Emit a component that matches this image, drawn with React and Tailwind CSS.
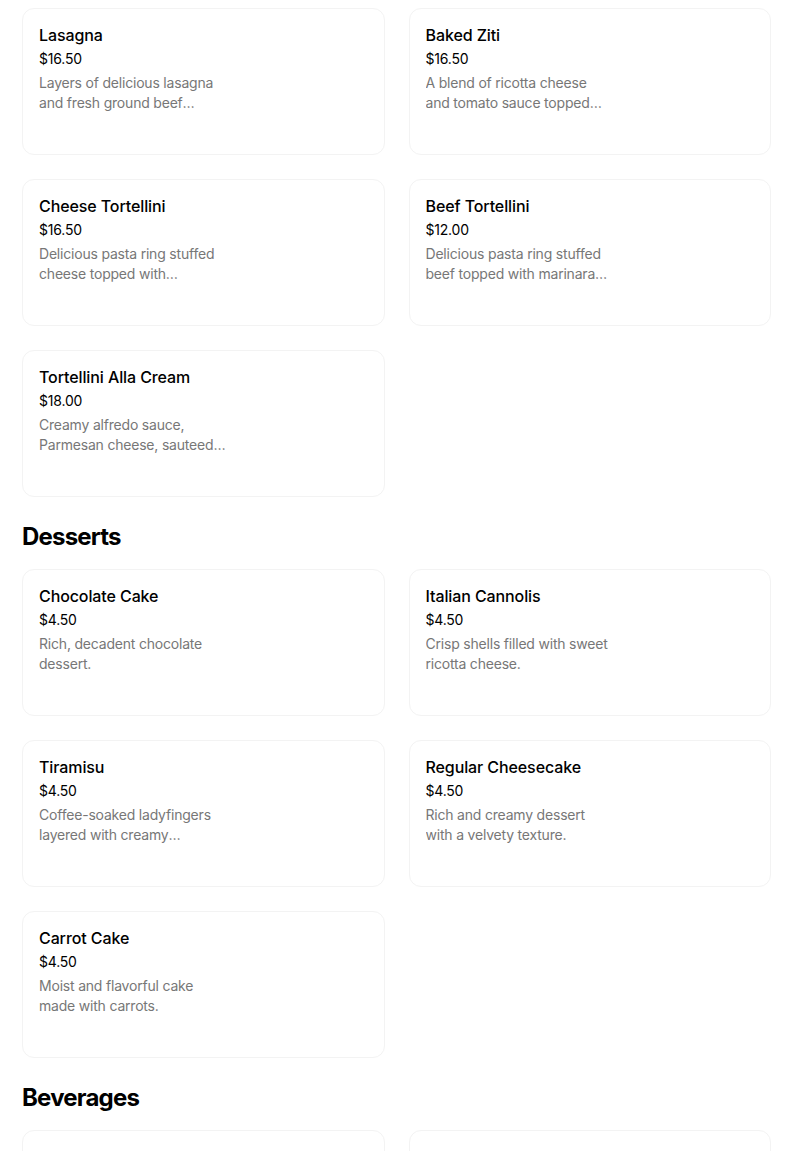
import React from 'react';

const sections = [
    {
        title: null,
        items: [
            { name: 'Lasagna', price: '$16.50', desc: 'Layers of delicious lasagna and fresh ground beef topped with marinara sauce and mozzarella.' },
            { name: 'Baked Ziti', price: '$16.50', desc: 'A blend of ricotta cheese and tomato sauce topped with melted mozzarella.' },
            { name: 'Cheese Tortellini', price: '$16.50', desc: 'Delicious pasta ring stuffed cheese topped with mozzarella and marinara sauce.' },
            { name: 'Beef Tortellini', price: '$12.00', desc: 'Delicious pasta ring stuffed beef topped with marinara sauce.' },
            { name: 'Tortellini Alla Cream', price: '$18.00', desc: 'Creamy alfredo sauce, Parmesan cheese, sauteed mushrooms and peas.' },
        ],
    },
    {
        title: 'Desserts',
        items: [
            { name: 'Chocolate Cake', price: '$4.50', desc: 'Rich, decadent chocolate dessert.' },
            { name: 'Italian Cannolis', price: '$4.50', desc: 'Crisp shells filled with sweet ricotta cheese.' },
            { name: 'Tiramisu', price: '$4.50', desc: 'Coffee-soaked ladyfingers layered with creamy mascarpone and cocoa.' },
            { name: 'Regular Cheesecake', price: '$4.50', desc: 'Rich and creamy dessert with a velvety texture.' },
            { name: 'Carrot Cake', price: '$4.50', desc: 'Moist and flavorful cake made with carrots.' },
        ],
    },
    {
        title: 'Beverages',
        items: [
            { name: 'Can Soda Products', price: '$2.00', desc: 'Assorted canned sodas.' },
            { name: 'Bottled Water', price: '$2.00', desc: 'Chilled spring water.' },
        ],
    },
];

const MenuCard = ({ item }) => (
    <div className="h-[147px] rounded-xl border border-[#f3f3f3] bg-white p-4">
        <h3 className="text-base leading-5 font-medium tracking-[-0.1px] text-black">{item.name}</h3>
        <p className="mt-1 text-sm leading-5 tracking-[-0.2px] text-black">{item.price}</p>
        <p className="mt-1 max-w-[188px] text-sm leading-5 tracking-[-0.2px] text-[#777777] line-clamp-2">{item.desc}</p>
    </div>
);

const App = () => {
    return (
        <div className="min-h-screen bg-white" style={{ fontFamily: 'Inter, "Noto Sans", sans-serif' }}>
            <div className="w-[749px] ml-[22px] pt-2">
                {sections.map((section, i) => (
                    <div key={i}>
                        {section.title && (
                            <h2 className="pt-6 pb-4 text-2xl leading-8 font-bold tracking-[-0.8px] text-black">
                                {section.title}
                            </h2>
                        )}
                        <div className="grid grid-cols-2 gap-6">
                            {section.items.map((item) => (
                                <MenuCard key={item.name} item={item} />
                            ))}
                        </div>
                    </div>
                ))}
            </div>
        </div>
    );
};

export default App;
